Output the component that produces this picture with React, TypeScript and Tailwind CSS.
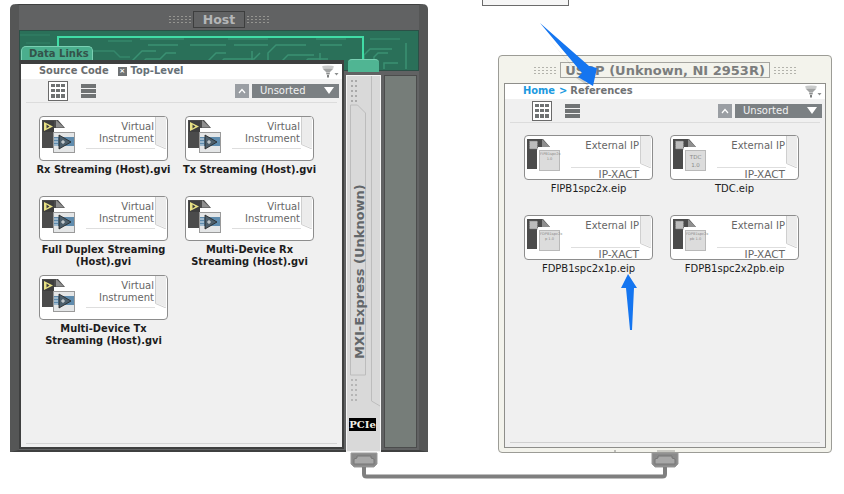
import React from "react";

const ui = "font-['DejaVu_Sans',sans-serif]";

function Dots() {
  return (
    <div className="grid grid-cols-6 gap-x-[2px] gap-y-[2px]">
      {Array.from({ length: 18 }).map((_, i) => (
        <span key={i} className="block w-[2px] h-[1px] bg-[#a3a39c] opacity-80" />
      ))}
    </div>
  );
}

function Funnel() {
  return (
    <svg width="17" height="13" viewBox="0 0 17 13">
      <ellipse cx="6" cy="2" rx="6" ry="1.6" fill="#c9cbcb" />
      <path d="M0.500 3.500h11L8 7H4z" fill="#a2a4a4" />
      <path d="M4 7.500h4l-0.500 2H4.500z" fill="#8c8e8e" />
      <path d="M5 10h2v2.500H5z" fill="#7d7f7f" />
      <path d="M12.500 8h4l-2 2.500z" fill="#8d8f8f" />
    </svg>
  );
}

function Toolbar({ left }: { left: string }) {
  return (
    <div className="h-[23px] flex items-center relative">
      <div className={`${left} w-[20px] h-[20px] border border-[#6a6a6a] bg-white grid grid-cols-3 gap-[1.5px] p-[2px]`}>
        {Array.from({ length: 9 }).map((_, i) => (
          <span key={i} className="bg-[#6f7273]" />
        ))}
      </div>
      <div className="w-[15px] ml-[13px] flex flex-col gap-[1px]">
        <span className="h-[4px] bg-[#707374]" />
        <span className="h-[4px] bg-[#707374]" />
        <span className="h-[4px] bg-[#707374]" />
      </div>
      <div className="ml-auto w-[14px] h-[14px] bg-[#9a9ea3] flex items-center justify-center mr-[3px]">
        <svg width="8" height="6" viewBox="0 0 8 6"><path d="M1 5l3-3.5L7 5" fill="none" stroke="#fff" strokeWidth="1.2" /></svg>
      </div>
      <div className="w-[87px] h-[14px] bg-[#7b8083] text-[#f2f2f2] text-[10px] leading-[14px] pl-[8px] flex items-center justify-between pr-[5px] mr-[3px]">
        <span>Unsorted</span>
        <svg width="10" height="7" viewBox="0 0 10 7"><path d="M0 0h10L5 7z" fill="#fff" /></svg>
      </div>
    </div>
  );
}

function Corner() {
  return (
    <svg className="absolute right-0 top-0" width="12" height="32" viewBox="0 0 12 32">
      <path d="M1 0h10v31L1 27z" fill="#ececec" />
      <path d="M0.500 0v27.500L11 32" fill="none" stroke="#cfcfcf" />
    </svg>
  );
}

function ViIcon() {
  return (
    <svg className="absolute left-[1px] top-[1px]" width="40" height="38" viewBox="0 0 40 38">
      <path d="M1 2h16l7 8H12v20H1z" fill="#4b4b4b" />
      <path d="M15 2l8 7.500h-8z" fill="#8f8f8f" />
      <rect x="2" y="3" width="11" height="11" fill="#3e3e3e" />
      <path d="M3 4l9 4.500-9 4.500z" fill="#e8e184" />
      <path d="M5.500 6.500l3 2-3 2z" fill="#3e3e3e" />
      <rect x="12.500" y="14.500" width="21" height="20" fill="#e4e6e7" stroke="#9a9a9a" />
      <rect x="13" y="19" width="20" height="9" fill="#5f8cae" />
      <path d="M18 17l12 7-12 7z" fill="#4d5f6c" stroke="#222" strokeWidth="0.8" />
      <path d="M20 24h4M22 22v4" stroke="#fff" strokeWidth="0.8" />
      <path d="M13 21h4M13 24h4M13 27h4" stroke="#dfe7ee" strokeWidth="1" />
    </svg>
  );
}

function IpIcon({ chip, big }: { chip: string; big?: boolean }) {
  return (
    <div className="absolute left-[2px] top-[3px] w-[36px] h-[32px]">
      <svg className="absolute left-0 top-0" width="26" height="30" viewBox="0 0 26 30">
        <path d="M0 0h16l7 8H10v22H0z" fill="#4b4b4b" />
        <path d="M15 0l8 8h-8z" fill="#8f8f8f" />
        <rect x="2.500" y="2" width="8" height="8" fill="#bdbdbd" stroke="#777" strokeDasharray="1 1" />
      </svg>
      <div
        className={`absolute left-[12px] top-[11px] w-[21px] h-[21px] bg-[#dcdcdc] border border-[#b9b9b9] text-center text-[#8a8a8a] whitespace-pre-line ${
          big ? "text-[5.5px] leading-[8px] pt-[2px]" : "text-[3.6px] leading-[5px] pt-[1px]"
        }`}
      >
        {chip}
      </div>
    </div>
  );
}

function ViCard({ name }: { name: React.ReactNode }) {
  return (
    <div className="w-[129px]">
      <div className="relative h-[45px] bg-white border border-[#8d8d8d] rounded-[4px] text-right text-[10px] leading-[12px] text-[#666] pt-[4px] pr-[13px]">
        <ViIcon />
        <Corner />
        <div>Virtual</div>
        <div>Instrument</div>
        <div className="absolute left-[46px] right-[12px] top-[31px] h-px bg-[#dedede]" />
      </div>
      <div className="mt-[3px] -mx-[9px] text-center font-bold text-[9.9px] leading-[12px] text-[#1c1c1c]">{name}</div>
    </div>
  );
}

function IpCard({ name, chip, big }: { name: string; chip: string; big?: boolean }) {
  return (
    <div className="w-[129px]">
      <div className="relative h-[45px] bg-white border border-[#8d8d8d] rounded-[4px] text-right text-[10px] leading-[12px] text-[#666] pt-[4px] pr-[13px]">
        <IpIcon chip={chip} big={big} />
        <Corner />
        <div>External IP</div>
        <div className="absolute left-[46px] right-[12px] top-[31px] h-px bg-[#dedede]" />
        <div className="absolute right-[13px] top-[32px] text-[10.5px]">IP-XACT</div>
      </div>
      <div className="mt-[3px] -mx-[9px] text-center text-[10px] leading-[12px] text-[#1c1c1c]">{name}</div>
    </div>
  );
}

function Circuit() {
  return (
    <svg className="absolute inset-0" width="398" height="41" viewBox="0 0 398 41">
      <g fill="none" stroke="#3f9a7a" strokeWidth="1.5" opacity="0.8">
        <path d="M112 30l10-10h14M118 36l8-8h14l6-6h10M128 14h30M150 38l8-8h30l8-8h10M170 14h36M196 36l8-8h30l6-6M214 14h34M232 36V20M248 38V22l8-8h30M262 30l6-6h26M278 38l10-10h20M300 14h22M300 22v16M344 38V24l6-6h22M354 38V26l4-4h10M364 38V32h14M386 12v26" />
        <path d="M72 20h22l6 6h10M88 10h24M120 8h44M170 6h30M208 8h40M256 6h34M296 8h30M350 8h30" opacity="0.7" />
        <path d="M0 4h30M6 12h24" opacity="0.4" />
      </g>
    </svg>
  );
}

function Host() {
  return (
    <div className="relative w-[418px] h-[448px] bg-[#616263] border border-[#3f4040] rounded-t-[5px] border-r-[9px] border-r-[#555656] border-l-[9px] border-l-[#555656] border-b-[2px]">
      <div className="h-[25px] flex items-center justify-center gap-[2px] pt-[3px]">
        <Dots />
        <div className="w-[52px] h-[17px] border border-[#3d3e3e] text-center text-[#b4b6b7] font-bold text-[12.5px] leading-[15px]">Host</div>
        <Dots />
      </div>
      <div className="relative h-[41px] bg-[#2a7059] border border-[#2c5047]">
        <Circuit />
        <div className="absolute left-[37px] top-[5px] w-[307px] h-[24px] border-t-[2px] border-l-[2px] border-r-[2px] border-[#41dca6]" />
        <div className="absolute left-[1px] top-[15px] w-[72px] h-[15px] bg-[#4aae8d] rounded-t-[5px] border-t border-x border-[#7ad0b3] pl-[7px] text-[#33534a] font-bold text-[10px] leading-[13px] whitespace-nowrap">Data Links</div>
        <div className="absolute left-[328px] top-[28px] w-[31px] h-[13px] bg-[#50b593] rounded-t-[4px] border-t border-[#7ad0b3]" />
      </div>
      <div className="flex items-start">
        <div className="relative z-10 -mt-[11px] w-[325px] h-[389px] border-[2px] border-[#3e3f3f] border-t-[4px] bg-[#f0f0f0] flex flex-col">
          <div className="h-[15px] bg-white flex items-center pl-[18px] pr-[3px] text-[9.9px] font-bold text-[#6b6e70]">
            <span>Source Code</span>
            <span className="ml-[9px] w-[9px] h-[9px] bg-[#6f7273] flex items-center justify-center text-white text-[7px] leading-none">×</span>
            <span className="ml-[4px] text-[#677178]">Top-Level</span>
            <span className="ml-auto"><Funnel /></span>
          </div>
          <Toolbar left="ml-[27px]" />
          <div className="mx-[5px] h-px bg-[#dcdcdc]" />
          <div className="grid grid-cols-[129px_129px] gap-x-[17px] pl-[18px] pt-[13px] auto-rows-[79.5px]">
            <ViCard name="Rx Streaming (Host).gvi" />
            <ViCard name="Tx Streaming (Host).gvi" />
            <ViCard name={<>Full Duplex Streaming<br />(Host).gvi</>} />
            <ViCard name={<>Multi-Device Rx<br />Streaming (Host).gvi</>} />
            <ViCard name={<>Multi-Device Tx<br />Streaming (Host).gvi</>} />
          </div>
          <div className="mt-auto mb-[3px] mx-[5px] h-px bg-[#d5d5d5]" />
        </div>
        <div className="flex gap-[3px] ml-[2px] mt-[4px]">
          <div className="relative w-[35px] h-[377px] bg-[#d9d9d9] border border-[#f4f4f4] overflow-hidden">
            <svg className="absolute left-0 top-0" width="33" height="375" viewBox="0 0 33 375">
              <path d="M24.500 0v325L33 330" fill="none" stroke="#bdbdbd" />
              <path d="M3.500 299V29h7l8 8v262z" fill="none" stroke="#bcbcbc" />
            </svg>
            <div className="absolute left-[4px] top-[4px] grid grid-cols-2 gap-x-[2px] gap-y-[3px]">
              {Array.from({ length: 10 }).map((_, i) => (
                <span key={i} className="w-[2px] h-[2px] bg-[#a9a9a9]" />
              ))}
            </div>
            <div className="absolute left-[4px] top-[303px] grid grid-cols-2 gap-x-[2px] gap-y-[3px]">
              {Array.from({ length: 10 }).map((_, i) => (
                <span key={i} className="w-[2px] h-[2px] bg-[#b5b5b5]" />
              ))}
            </div>
            <div className="absolute left-[5px] top-[108px] h-[175px] w-[16px] flex items-center justify-center [writing-mode:vertical-rl] rotate-180 text-[#63676a] font-bold text-[13px] whitespace-nowrap">MXI-Express (Unknown)</div>
            <div className="absolute left-[2px] top-[342px] w-[27px] h-[13px] bg-black text-center text-[#f1efe6] font-bold text-[10px] leading-[13px] font-['DejaVu_Serif',serif] whitespace-nowrap">PCIe</div>
          </div>
          <div className="w-[33px] h-[373px] bg-[#767d79] border border-[#4b4c4c]" />
        </div>
      </div>
    </div>
  );
}

function Usrp() {
  return (
    <div className="relative w-[334px] h-[398px] bg-[#f3f3ec] border border-[#9c9c96] rounded-[4px] px-[5px] pt-[4px]">
      <div className="h-[20px] mb-[3px] flex items-center justify-center gap-[4px]">
        <Dots />
        <div className="w-[210px] h-[16px] border border-[#a5a5a0] text-center text-[#7b7d7d] font-bold text-[13px] leading-[15px] whitespace-nowrap">USRP (Unknown, NI 2953R)</div>
        <Dots />
      </div>
      <div className="h-[365px] border border-[#8e8e8a] bg-[#f0f0f0] flex flex-col">
        <div className="h-[15px] bg-white flex items-center pl-[18px] pr-[3px] text-[9.9px] font-bold text-[#6f7274]">
          <span className="text-[#1c9ae0]">Home</span>
          <span className="ml-[4px] text-[#1c9ae0]">&gt;</span>
          <span className="ml-[3px]">References</span>
          <span className="ml-auto"><Funnel /></span>
        </div>
        <Toolbar left="ml-[27px]" />
        <div className="mx-[5px] h-px bg-[#dcdcdc]" />
        <div className="grid grid-cols-[129px_129px] gap-x-[17px] pl-[19px] pt-[12px] auto-rows-[80px]">
          <IpCard name="FIPB1spc2x.eip" chip={"FIPB1spc2x\n1.0"} />
          <IpCard name="TDC.eip" chip={"TDC\n1.0"} big />
          <IpCard name="FDPB1spc2x1p.eip" chip={"FDPB1spc2x\np 1.0"} />
          <IpCard name="FDPB1spc2x2pb.eip" chip={"FDPB1spc2x\npb 1.0"} />
        </div>
        <div className="mt-auto mb-[4px] mx-[5px] h-px bg-[#d0d0d0]" />
      </div>
      <div className="absolute left-[115px] bottom-0 w-[2px] h-[2px] bg-[#bdbdb8]" />
      <div className="absolute left-[158px] bottom-0 w-[18px] h-[2px] bg-[#c9c9c3]" />
    </div>
  );
}

function Overlay() {
  return (
    <svg className="absolute inset-0 pointer-events-none" width="844" height="494" viewBox="0 0 844 494">
      <g fill="#8a8a8a" stroke="#9b9b9b">
        <path d="M351 453h26v11l-3 3h-20l-3-3z" />
        <path d="M652 453h26v11l-3 3h-20l-3-3z" />
      </g>
      <path d="M354 464v-5l3-1v-2h14v2l3 1v5zM655 464v-5l3-1v-2h14v2l3 1v5z" fill="#a8a8a8" stroke="#777" />
      <path d="M364 467v7q0 2.500 2.500 2.500h296q2.500 0 2.500-2.500v-7" fill="none" stroke="#7f7f7f" strokeWidth="4" />
      <path d="M538 26L580 76l-4 2 14 9z" fill="#000" opacity="0.15" />
      <path d="M540 23L589 66l8 2-4 18-15-9 4-4z" fill="#1475f0" />
      <path d="M628 274l9 14-3 0-2 42h-2l-4-42-5 0z" fill="#1475f0" />
    </svg>
  );
}

export default function App() {
  return (
    <div className={`${ui} relative w-[844px] h-[494px] bg-white overflow-hidden`}>
      <div className="absolute left-[482px] -top-[10px] w-[87px] h-[16px] border border-[#6b6b6b] bg-[#f6f6f6]" />
      <div className="flex items-start pl-[10px] pt-[4px]">
        <Host />
        <div className="ml-[70px] mt-[51px]">
          <Usrp />
        </div>
      </div>
      <Overlay />
    </div>
  );
}
